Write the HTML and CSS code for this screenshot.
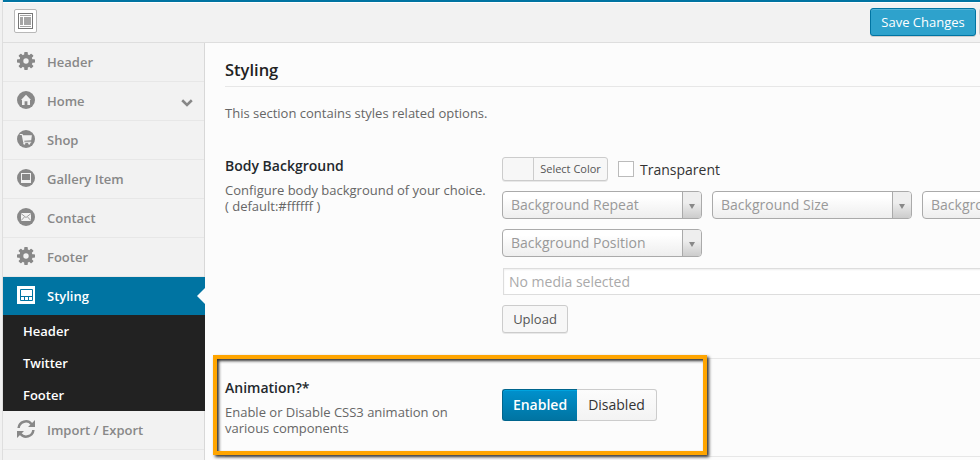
FILE: index.html
```html
<!DOCTYPE html>
<html lang="en">
<head>
<meta charset="utf-8">
<title>Theme Options</title>
<link rel="stylesheet" href="styles.css">
</head>
<body>
<svg class="defs" width="0" height="0" aria-hidden="true">
  <symbol id="gear" viewBox="0 0 18 18"><g fill="currentColor"><g id="teeth"><rect x="7.2" y="0" width="3.6" height="18" rx=".8"/><rect x="0" y="7.2" width="18" height="3.600" rx=".8"/></g><use href="#teeth" transform="rotate(45 9 9)"/></g><circle cx="9" cy="9" r="4.700" fill="none" stroke="currentColor" stroke-width="4"/><circle cx="9" cy="9" r="2.700" fill="#f2f2f2"/></symbol>
</svg>
<div class="panel">
  <header class="topbar">
    <button class="expand" aria-label="Expand"><svg width="15" height="16" viewBox="0 0 15 16"><rect x=".5" y=".5" width="14" height="15" fill="#fff" stroke="#777"/><path d="M2 2h11v1H2zM2 4h3v8H2zM6 4h7v8H6zM2 13h11v1H2z" fill="#a5a5a5"/></svg></button>
    <button class="save">Save Changes</button><button class="reset" aria-label="Reset"></button>
  </header>
  <div class="columns">
    <nav class="menu">
      <a class="item"><svg class="ico"><use href="#gear"/></svg>Header</a>
      <a class="item"><svg class="ico" viewBox="0 0 18 18"><circle cx="9" cy="9" r="9" fill="currentColor"/><path d="M4 9l5-5.200L14 9h-1v5h-2.600v-3.700H7.600V14H5V9z" fill="#f2f2f2"/></svg>Home<svg class="chevron" viewBox="0 0 12 8"><path d="M1.200 1.300L6 6l4.800-4.700" fill="none" stroke="currentColor" stroke-width="2.600"/></svg></a>
      <a class="item"><svg class="ico" viewBox="0 0 18 18"><circle cx="9" cy="9" r="9" fill="currentColor"/><path d="M2.800 4h2.700l.5 1.300h8.900l-.7 4.900-7 .6.200.9h6.800v1H6.300L4.700 5H2.800z" fill="#f2f2f2"/><circle cx="7.300" cy="13.600" r="1.100" fill="#f2f2f2"/><circle cx="12.200" cy="13.600" r="1.100" fill="#f2f2f2"/></svg>Shop</a>
      <a class="item"><svg class="ico" viewBox="0 0 18 18"><circle cx="9" cy="9" r="9" fill="currentColor"/><path fill-rule="evenodd" d="M4 4h10v10H4zM5 5v6h8V5z" fill="#f2f2f2"/></svg>Gallery Item</a>
      <a class="item"><svg class="ico" viewBox="0 0 18 18"><circle cx="9" cy="9" r="9" fill="currentColor"/><path d="M4 5h10v8H4z" fill="#f2f2f2"/><path d="M4 5.500l5 4 5-4M4 12.700L7.400 9M14 12.700L10.600 9" fill="none" stroke="currentColor" stroke-width=".8"/></svg>Contact</a>
      <a class="item"><svg class="ico"><use href="#gear"/></svg>Footer</a>
      <a class="item active"><svg class="ico" viewBox="0 0 18 18"><path fill="#fff" d="M0 0h18v18H0z"/><path d="M3.500 3.500h12v11h-12zM3.500 10.500h12M7.500 11v3.500M11.500 11v3.500" fill="none" stroke="#0074a2"/></svg>Styling</a>
      <div class="submenu"><a>Header</a><a>Twitter</a><a>Footer</a></div>
      <a class="item"><svg class="ico" viewBox="0 0 18 18"><path d="M1.600 8A7.300 7.300 0 0 1 14.600 4.200M16.400 10A7.300 7.300 0 0 1 3.400 13.800" fill="none" stroke="currentColor" stroke-width="2.500"/><path d="M18 0v7h-7zM0 18v-7h7z" fill="currentColor"/></svg>Import / Export</a>
    </nav>
    <main class="content">
      <h1>Styling</h1>
      <p class="intro">This section contains styles related options.</p>
      <section class="option background">
        <div class="label"><h2>Body Background</h2><p>Configure body background of your choice.<br>( default:#ffffff )</p></div>
        <div class="fields">
          <div class="color-row"><button class="picker"><i></i><span>Select Color</span></button><span class="check"></span><span class="transparent">Transparent</span></div>
          <div class="selects">
            <div class="select"><span>Background Repeat</span><b></b></div>
            <div class="select"><span>Background Size</span><b></b></div>
            <div class="select"><span>Background Attachment</span><b></b></div>
            <div class="select"><span>Background Position</span><b></b></div>
          </div>
          <div class="media">No media selected</div>
          <button class="upload">Upload</button>
        </div>
      </section>
      <section class="option animation">
        <div class="label"><h2>Animation?*</h2><p>Enable or Disable CSS3 animation on<br>various components</p></div>
        <div class="fields"><div class="switch"><button class="on">Enabled</button><button class="off">Disabled</button></div></div>
        <div class="highlight"></div>
      </section>
    </main>
  </div>
</div>
</body>
</html>
```

FILE: styles.css
```css
* { box-sizing: border-box; }
body { margin: 0; width: 980px; height: 460px; overflow: hidden; background: #f1f1f1; font: 13px/16px "Open Sans", sans-serif; color: #666; }
button { font: inherit; margin: 0; padding: 0; }
h1, h2, p { margin: 0; }
.defs { display: block; height: 0; }
.panel { margin-left: 2px; border-left: 1px solid #dedede; height: 460px; background: #fcfcfc; overflow: hidden; }
.topbar { display: flex; height: 43px; border-top: 2px solid #0074a2; border-bottom: 1px solid #dedede; background: #f2f2f2; box-shadow: inset 0 1px #fff; padding: 6px 0 0 11px; }
.expand { display: grid; place-items: center; width: 23px; height: 24px; margin-top: 1px; border: 1px solid #b8b8b8; border-radius: 2px; background: #fff; }
.expand svg { display: block; }
.save { width: 106px; height: 28px; margin-left: auto; border: 1px solid #0074a2; border-radius: 3px; background: #2ea2cc; box-shadow: inset 0 1px rgba(120,200,230,.5), 0 1px rgba(0,0,0,.15); color: #fff; line-height: 26px; flex: none; }
.reset { width: 40px; height: 28px; margin: 0 -39px 0 3px; border: 1px solid #ccc; border-radius: 3px; background: #f7f7f7; flex: none; }
.columns { display: flex; height: 417px; }
.menu { flex: none; width: 202px; border-right: 1px solid #d8d8d8; background: #f2f2f2; }
.item { display: flex; align-items: center; height: 39px; padding: 0 11px 1px 14px; border-bottom: 1px solid #e7e7e7; color: #888; font-weight: 600; }
.ico { width: 18px; height: 18px; margin: -2px 12px 0 0; flex: none; display: block; }
.chevron { width: 12px; height: 8px; margin: 4px 0 0 auto; }
.active { position: relative; width: 202px; height: 38px; border: 0; background: #0074a2; color: #fff; }
.active::after { content: ""; position: absolute; right: 0; top: 11px; border: 8px solid transparent; border-right-color: #fcfcfc; border-left: 0; }
.submenu { width: 202px; height: 96px; background: #222; color: #fff; font-weight: 600; }
.submenu a { display: block; height: 32px; padding-left: 20px; line-height: 32px; }
.content { width: 775px; padding: 16px 0 0 20px; overflow: hidden; }
h1 { height: 28px; border-bottom: 1px solid #e7e7e7; color: #222; font-size: 16.5px; line-height: 22px; font-weight: 600; }
.intro { margin-top: 18px; height: 16px; }
h2 { color: #23282d; font-size: 14px; line-height: 18px; font-weight: 600; }
.option { display: flex; border-bottom: 1px solid #e7e7e7; }
.label { width: 277px; flex: none; }
.label p { margin-top: 7px; white-space: nowrap; }
.background { height: 238px; padding-top: 36px; }
.color-row { display: flex; align-items: center; height: 24px; }
.picker { display: flex; width: 106px; height: 24px; border: 1px solid #ccc; border-radius: 3px; background: #f7f7f7; box-shadow: 0 1px rgba(0,0,0,.08); overflow: hidden; color: #555; font-size: 11px; line-height: 22px; }
.picker i { width: 30px; }
.picker span { flex: 1; height: 22px; border-left: 1px solid #ccc; }
.check { width: 16px; height: 16px; margin: 0 6px 0 10px; border: 1px solid #bbb; background: #fff; }
.transparent { color: #333; font-size: 14px; padding-top: 2px; }
.selects { display: grid; grid-template-columns: repeat(3, 200px); gap: 10px; margin-top: 10px; }
.select { display: flex; height: 28px; border: 1px solid #aaa; border-radius: 4px; background: linear-gradient(#fff 20%, #eee); color: #999; font-size: 14px; line-height: 26px; overflow: hidden; white-space: nowrap; }
.select span { width: 179px; padding-left: 8px; overflow: hidden; }
.select b { width: 19px; border-left: 1px solid #aaa; background: linear-gradient(#eee 40%, #ccc); display: grid; place-items: center; }
.select b::after { content: ""; border: 3px solid transparent; border-top: 5px solid #888; border-bottom: 0; margin: 2px 1px 0 0; }
.media { width: 620px; height: 27px; margin: 11px 0 0 1px; padding-left: 5px; border: 1px solid #ddd; background: #fff; box-shadow: inset 0 1px 2px rgba(0,0,0,.07); color: #aaa; font-size: 14px; line-height: 26px; }
.upload { width: 66px; height: 28px; margin-top: 10px; border: 1px solid #ccc; border-radius: 3px; background: #f7f7f7; box-shadow: 0 1px rgba(0,0,0,.08); color: #555; line-height: 26px; display: block; }
.animation { position: relative; height: 98px; padding-top: 20px; }
.animation .fields { padding-top: 10px; }
.switch { display: flex; height: 32px; color: #333; font-size: 14px; line-height: 30px; }
.on { width: 75px; border: 1px solid #00658d; border-right: 0; border-radius: 3px 0 0 3px; background: linear-gradient(#0091cd, #0074a2); box-shadow: inset 0 1px #00a4df; color: #fff; font-weight: 600; }
.off { width: 80px; border: 1px solid #ccc; border-left: 0; border-radius: 0 3px 3px 0; background: linear-gradient(#fcfcfc, #f3f3f3); color: #333; }
.highlight { position: absolute; left: -12px; top: -4px; width: 494px; height: 100px; border: 4px solid #ffa500; box-shadow: 2px 2px 3px #333, inset 2px 2px 3px #333; }
```
